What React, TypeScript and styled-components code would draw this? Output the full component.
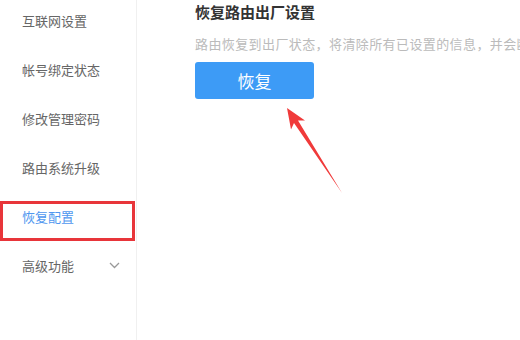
import styled, { createGlobalStyle } from "styled-components";

const GlobalStyle = createGlobalStyle`
    html, body {
        margin: 0;
        padding: 0;
        background: #fff;
        overflow: hidden;
    }
    body {
        font-family: "Noto Sans CJK SC", "Noto Sans", sans-serif;
    }
`;

const menuItems = ["互联网设置", "帐号绑定状态", "修改管理密码", "路由系统升级", "恢复配置", "高级功能"];
const activeItem = "恢复配置";

const Page = styled.div`
    position: relative;
    display: flex;
    flex-direction: row;
    width: 520px;
    height: 340px;
    overflow: hidden;
`;

const Sidebar = styled.aside`
    width: 136px;
    flex-shrink: 0;
    border-right: 1px solid #f0f0f0;
    display: flex;
    flex-direction: column;
    margin-top: -4px;
`;

const MenuItem = styled.div<{ $active?: boolean }>`
    height: 49px;
    display: flex;
    align-items: center;
    justify-content: space-between;
    padding: 0 16px 0 22px;
    font-size: 13px;
    color: ${(p) => (p.$active ? "#4f97ef" : "#666")};
    cursor: pointer;
`;

const Chevron = styled.svg`
    width: 11px;
    height: 7px;
`;

const Content = styled.main`
    flex: 1;
    padding-left: 58px;
    display: flex;
    flex-direction: column;
    align-items: flex-start;
    min-width: 0;
`;

const Title = styled.h2`
    margin: 0;
    font-size: 15px;
    line-height: 24px;
    font-weight: 700;
    color: #333;
`;

const Desc = styled.p`
    margin: 10px 0 0;
    font-size: 13px;
    line-height: 20px;
    letter-spacing: 0.4px;
    color: #bbb;
    white-space: nowrap;
`;

const RestoreButton = styled.button`
    margin-top: 8px;
    width: 119px;
    height: 37px;
    border: none;
    border-radius: 3px;
    background-color: #3d9bf6;
    color: #fff;
    font-family: inherit;
    font-size: 17px;
    cursor: pointer;
`;

const Highlight = styled.div`
    position: absolute;
    left: 0;
    top: 201px;
    width: 135px;
    height: 40px;
    box-sizing: border-box;
    border: 3px solid #e8353a;
    pointer-events: none;
`;

const Arrow = styled.svg`
    position: absolute;
    left: 0;
    top: 0;
    pointer-events: none;
`;

export default function App() {
    return (
        <Page>
            <GlobalStyle />
            <Sidebar>
                {menuItems.map((item) => (
                    <MenuItem key={item} $active={item === activeItem}>
                        {item}
                        {item === "高级功能" && (
                            <Chevron viewBox="0 0 11 7">
                                <polyline points="1,1 5.5,5.5 10,1" fill="none" stroke="#999" strokeWidth="1.3" />
                            </Chevron>
                        )}
                    </MenuItem>
                ))}
            </Sidebar>
            <Content>
                <Title>恢复路由出厂设置</Title>
                <Desc>路由恢复到出厂状态，将清除所有已设置的信息，并会断开网络连接</Desc>
                <RestoreButton>恢复</RestoreButton>
            </Content>
            <Highlight />
            <Arrow width="520" height="340" viewBox="0 0 520 340">
                <polygon
                    points="287,108 291,129.5 294,123 342,193 298,120.5 305,120.5"
                    fill="#f03a3a"
                />
            </Arrow>
        </Page>
    );
}
